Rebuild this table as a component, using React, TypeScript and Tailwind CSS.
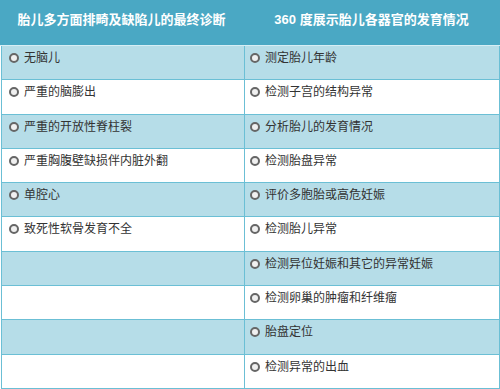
import React from 'react';

const left = [
  '无脑儿',
  '严重的脑膨出',
  '严重的开放性脊柱裂',
  '严重胸腹壁缺损伴内脏外翻',
  '单腔心',
  '致死性软骨发育不全',
  '',
  '',
  '',
  '',
];

const right = [
  '测定胎儿年龄',
  '检测子宫的结构异常',
  '分析胎儿的发育情况',
  '检测胎盘异常',
  '评价多胞胎或高危妊娠',
  '检测胎儿异常',
  '检测异位妊娠和其它的异常妊娠',
  '检测卵巢的肿瘤和纤维瘤',
  '胎盘定位',
  '检测异常的出血',
];

const Bullet = () => (
  <span className="inline-block w-[10px] h-[10px] rounded-full border-[2.5px] border-[#666] bg-[#f0f0f0] shrink-0" />
);

const Cell: React.FC<{ text: string; first?: boolean }> = ({ text, first }) => (
  <div className={`flex items-start gap-[5px] pt-[4px] ${first ? 'w-[243px] pl-[7px] border-r border-[#6bbfd5]' : 'flex-1 pl-[5px]'}`}>
    {text && (
      <>
        <span className="mt-[3px] flex"><Bullet /></span>
        <span className="text-[12px] leading-[17px] text-[#333]">{text}</span>
      </>
    )}
  </div>
);

export default function App() {
  return (
    <div
      className="w-[500px] h-[389px] bg-white flex flex-col"
      style={{ fontFamily: '"Liberation Sans", "Noto Sans CJK SC", sans-serif' }}
    >
      <div className="h-[46px] bg-[#4aa8c4] border-b border-[#d6eef5] flex text-white font-bold text-[13px]">
        <div className="w-[243px] flex justify-center pt-[10px]">胎儿多方面排畸及缺陷儿的最终诊断</div>
        <div className="flex-1 flex justify-center pt-[10px]">360 度展示胎儿各器官的发育情况</div>
      </div>
      <div className="flex-1 flex flex-col border-l border-r border-[#6bbfd5] ml-[1px]">
        {left.map((l, i) => (
          <div
            key={i}
            className={`flex-1 flex border-b border-[#6bbfd5] ${i % 2 === 0 ? 'bg-[#b6dde8]' : 'bg-white'}`}
          >
            <Cell text={l} first />
            <Cell text={right[i]} />
          </div>
        ))}
      </div>
    </div>
  );
}
